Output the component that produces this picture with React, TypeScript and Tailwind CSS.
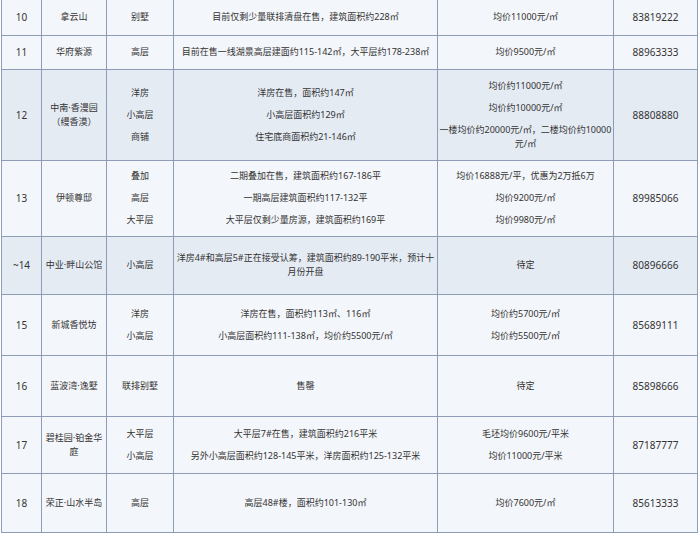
import React from 'react';

type Row = {
  no: string;
  name: React.ReactNode;
  types: string[];
  details: string[];
  prices: string[];
  phone: string;
  h: string;
  shade?: boolean;
};

const rows: Row[] = [
  {
    no: '10',
    name: '拿云山',
    types: ['别墅'],
    details: ['目前仅剩少量联排清盘在售，建筑面积约228㎡'],
    prices: ['均价11000元/㎡'],
    phone: '83819222',
    h: 'h-[35px]',
  },
  {
    no: '11',
    name: '华府紫源',
    types: ['高层'],
    details: ['目前在售一线湖景高层建面约115-142㎡，大平层约178-238㎡'],
    prices: ['均价9500元/㎡'],
    phone: '88963333',
    h: 'h-[34px]',
  },
  {
    no: '12',
    name: (
      <>
        中南·香漫园
        <br />
        （缦香漠）
      </>
    ),
    types: ['洋房', '小高层', '商铺'],
    details: ['洋房在售，面积约147㎡', '小高层面积约129㎡', '住宅底商面积约21-146㎡'],
    prices: ['均价约11000元/㎡', '均价约10000元/㎡', '一楼均价约20000元/㎡，二楼均价约10000元/㎡'],
    phone: '88808880',
    h: 'h-[91px]',
    shade: true,
  },
  {
    no: '13',
    name: '伊顿尊邸',
    types: ['叠加', '高层', '大平层'],
    details: ['二期叠加在售，建筑面积约167-186平', '一期高层建筑面积约117-132平', '大平层仅剩少量房源，建筑面积约169平'],
    prices: ['均价16888元/平，优惠为2万抵6万', '均价9200元/㎡', '均价9980元/㎡'],
    phone: '89985066',
    h: 'h-[76px]',
  },
  {
    no: '~14',
    name: '中业·畔山公馆',
    types: ['小高层'],
    details: ['洋房4#和高层5#正在接受认筹，建筑面积约89-190平米，预计十月份开盘'],
    prices: ['待定'],
    phone: '80896666',
    h: 'h-[58px]',
    shade: true,
  },
  {
    no: '15',
    name: '新城香悦坊',
    types: ['洋房', '小高层'],
    details: ['洋房在售，面积约113㎡、116㎡', '小高层面积约111-138㎡，均价约5500元/㎡'],
    prices: ['均价约5700元/㎡', '均价约5500元/㎡'],
    phone: '85689111',
    h: 'h-[61px]',
  },
  {
    no: '16',
    name: '蓝波湾·逸墅',
    types: ['联排别墅'],
    details: ['售罄'],
    prices: ['待定'],
    phone: '85898666',
    h: 'h-[61px]',
  },
  {
    no: '17',
    name: '碧桂园·铂金华庭',
    types: ['大平层', '小高层'],
    details: ['大平层7#在售，建筑面积约216平米', '另外小高层面积约128-145平米，洋房面积约125-132平米'],
    prices: ['毛坯均价9600元/平米', '均价11000元/平米'],
    phone: '87187777',
    h: 'h-[57px]',
  },
  {
    no: '18',
    name: '荣正·山水半岛',
    types: ['高层'],
    details: ['高层48#楼，面积约101-130㎡'],
    prices: ['均价7600元/㎡'],
    phone: '85613333',
    h: 'h-[59px]',
  },
];

function Lines({ items }: { items: string[] }) {
  return (
    <div className="flex flex-col gap-[8px]">
      {items.map((t, i) => (
        <p key={i}>{t}</p>
      ))}
    </div>
  );
}

export default function App() {
  const cell = 'border border-[#8d9db7] text-center align-middle';
  return (
    <div className="h-[536px] w-[700px] bg-white pl-[1px]">
      <table
        className="w-[697px] table-fixed border-collapse text-[9px] leading-[14px] text-[#333]"
        style={{ fontFamily: '"Noto Sans", "Noto Sans CJK SC", sans-serif' }}
      >
        <colgroup>
          <col className="w-[40px]" />
          <col className="w-[65px]" />
          <col className="w-[67px]" />
          <col className="w-[264px]" />
          <col className="w-[176px]" />
          <col className="w-[84px]" />
        </colgroup>
        <tbody>
          {rows.map((r, i) => (
            <tr
              key={r.no}
              className={`${r.h} ${r.shade ? 'bg-[#e5ebf3]' : 'bg-[#f3f6fa]'} ${i === 0 ? '[&>td]:border-t-0' : ''}`}
            >
              <td className={`${cell} px-[2px] text-[10px]`}>{r.no}</td>
              <td className={`${cell} px-[2px]`}>{r.name}</td>
              <td className={`${cell} px-[2px]`}>
                <Lines items={r.types} />
              </td>
              <td className={`${cell} px-[2px]`}>
                <Lines items={r.details} />
              </td>
              <td className={`${cell} px-0`}>
                <Lines items={r.prices} />
              </td>
              <td className={`${cell} px-[2px] text-[10px]`}>{r.phone}</td>
            </tr>
          ))}
        </tbody>
      </table>
    </div>
  );
}
